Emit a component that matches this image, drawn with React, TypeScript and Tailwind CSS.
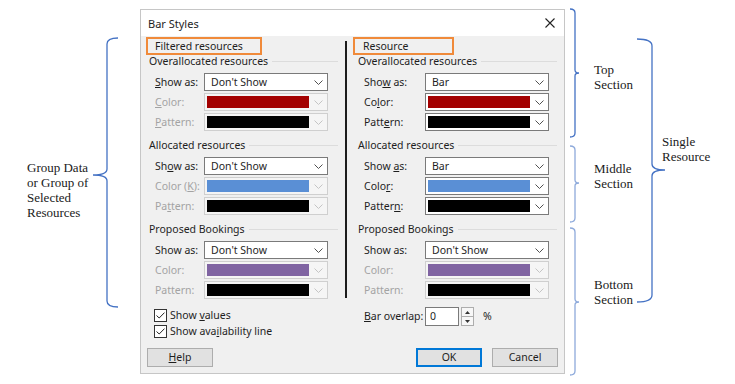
import type { ReactNode } from "react";

type ComboProps = {
  value?: string;
  swatch?: string;
  disabled?: boolean;
};

function Chevron({ disabled }: { disabled?: boolean }) {
  return (
    <svg width="9" height="5" viewBox="0 0 9 5">
      <path
        d="M0.5 0.5 L4.5 4.5 L8.5 0.5"
        fill="none"
        stroke={disabled ? "#c4c4c4" : "#505050"}
        strokeWidth="1"
      />
    </svg>
  );
}

function Combo({ value, swatch, disabled }: ComboProps) {
  return (
    <div
      className={`flex h-[18px] w-[124px] items-center border ${
        disabled ? "border-[#cfcfcf] bg-[#f5f5f5]" : "border-[#7a7a7a] bg-white"
      }`}
    >
      {swatch ? (
        <div className={`ml-[2px] h-[12px] w-[102px] ${swatch}`} />
      ) : (
        <span className="ml-[6px] whitespace-nowrap text-[#1e1e1e]">{value}</span>
      )}
      <span className="ml-auto mr-[4px] flex items-center">
        <Chevron disabled={disabled} />
      </span>
    </div>
  );
}

function Row({
  label,
  labelWidth,
  disabled,
  children,
}: {
  label: ReactNode;
  labelWidth: string;
  disabled?: boolean;
  children: ReactNode;
}) {
  return (
    <div className="flex h-[18px] items-center">
      <span
        className={`${labelWidth} whitespace-nowrap ${disabled ? "text-[#a3a3a3]" : "text-[#1e1e1e]"}`}
      >
        {label}
      </span>
      {children}
    </div>
  );
}

function GroupLabel({ text, indent }: { text: string; indent: string }) {
  return (
    <div className={`flex h-[12px] items-center ${indent}`}>
      <span className="whitespace-nowrap text-[#1e1e1e]">{text}</span>
      <div className="ml-[4px] h-px flex-1 bg-[#dcdcdc]" />
    </div>
  );
}

function Checkbox({ label }: { label: ReactNode }) {
  return (
    <div className="flex h-[16px] items-center pl-[8px]">
      <div className="flex h-[13px] w-[13px] items-center justify-center border border-[#333333] bg-white">
        <svg width="9" height="7" viewBox="0 0 9 7">
          <path d="M0.5 3.5 L3.2 6 L8.5 0.6" fill="none" stroke="#222" strokeWidth="1" />
        </svg>
      </div>
      <span className="ml-[3px] whitespace-nowrap text-[#1e1e1e]">{label}</span>
    </div>
  );
}

function LeftGroup({
  title,
  color,
  colorLabel,
  showLabel,
  patternLabel,
}: {
  title: string;
  color: string;
  colorLabel: ReactNode;
  showLabel: ReactNode;
  patternLabel: ReactNode;
}) {
  return (
    <div className="flex flex-col">
      <GroupLabel text={title} indent="pl-[3px]" />
      <div className="mt-[6px] flex flex-col gap-[2px] pl-[9px]">
        <Row label={showLabel} labelWidth="w-[49px]">
          <Combo value="Don't Show" />
        </Row>
        <Row label={colorLabel} labelWidth="w-[49px]" disabled>
          <Combo swatch={color} disabled />
        </Row>
        <Row label={patternLabel} labelWidth="w-[49px]" disabled>
          <Combo swatch="bg-black" disabled />
        </Row>
      </div>
    </div>
  );
}

function RightGroup({
  title,
  value,
  color,
  disabled,
  showLabel,
  colorLabel,
  patternLabel,
}: {
  title: string;
  value: string;
  color: string;
  disabled?: boolean;
  showLabel: ReactNode;
  colorLabel: ReactNode;
  patternLabel: ReactNode;
}) {
  return (
    <div className="flex flex-col">
      <GroupLabel text={title} indent="pl-[6px]" />
      <div className="mt-[6px] flex flex-col gap-[2px] pl-[12px]">
        <Row label={showLabel} labelWidth="w-[61px]">
          <Combo value={value} />
        </Row>
        <Row label={colorLabel} labelWidth="w-[61px]" disabled={disabled}>
          <Combo swatch={color} disabled={disabled} />
        </Row>
        <Row label={patternLabel} labelWidth="w-[61px]" disabled={disabled}>
          <Combo swatch="bg-black" disabled={disabled} />
        </Row>
      </div>
    </div>
  );
}

function Dialog() {
  return (
    <div className="ml-[140px] mt-[9px] flex w-[425px] flex-col border border-[#c6c6c6] bg-[#f0f0f0] font-['Noto_Sans',sans-serif] text-[10.5px] leading-none">
      {/* title bar */}
      <div className="flex h-[26px] items-center bg-white pl-[7px] pr-[9px]">
        <span className="text-[11px] text-[#1e1e1e]">Bar Styles</span>
        <svg className="ml-auto" width="10" height="10" viewBox="0 0 10 10">
          <path d="M0.5 0.5 L9.5 9.5 M9.5 0.5 L0.5 9.5" stroke="#222" strokeWidth="1.1" />
        </svg>
      </div>

      {/* columns */}
      <div className="flex pt-[1px]">
        <div className="ml-[5px] flex w-[192px] flex-col">
          <div className="flex h-[18px] w-[116px] items-center border-2 border-[#f08a3a] pl-[7px] text-[#1e1e1e]">
            Filtered resources
          </div>
          <div className="flex flex-col gap-[8px]">
            <LeftGroup
              title="Overallocated resources"
              color="bg-[#a30000]"
              showLabel={<><u>S</u>how as:</>}
              colorLabel={<><u>C</u>olor:</>}
              patternLabel={<><u>P</u>attern:</>}
            />
            <LeftGroup
              title="Allocated resources"
              color="bg-[#5a8fd5]"
              showLabel={<>Sh<u>o</u>w as:</>}
              colorLabel={<>Color (<u>K</u>):</>}
              patternLabel={<>Pa<u>t</u>tern:</>}
            />
            <LeftGroup
              title="Proposed Bookings"
              color="bg-[#8064a2]"
              showLabel="Show as:"
              colorLabel="Color:"
              patternLabel="Pattern:"
            />
          </div>
        </div>

        <div className="ml-[7px] mt-[4px] h-[257px] w-[2px] bg-[#1c1c1c]" />

        <div className="ml-[5px] flex w-[205px] flex-col">
          <div className="ml-[1px] flex h-[18px] w-[101px] items-center border-2 border-[#f08a3a] pl-[8px] text-[#1e1e1e]">
            Resource
          </div>
          <div className="flex flex-col gap-[8px]">
            <RightGroup
              title="Overallocated resources"
              value="Bar"
              color="bg-[#a30000]"
              showLabel={<>Sho<u>w</u> as:</>}
              colorLabel={<>Co<u>l</u>or:</>}
              patternLabel={<>Patt<u>e</u>rn:</>}
            />
            <RightGroup
              title="Allocated resources"
              value="Bar"
              color="bg-[#5a8fd5]"
              showLabel={<>Show <u>a</u>s:</>}
              colorLabel={<>Colo<u>r</u>:</>}
              patternLabel={<>Patter<u>n</u>:</>}
            />
            <RightGroup
              title="Proposed Bookings"
              value="Don't Show"
              color="bg-[#8064a2]"
              disabled
              showLabel="Show as:"
              colorLabel="Color:"
              patternLabel="Pattern:"
            />
          </div>
        </div>
      </div>

      {/* options */}
      <div className="mt-[8px] flex h-[32px]">
        <div className="ml-[5px] flex w-[192px] flex-col">
          <Checkbox label={<>Show <u>v</u>alues</>} />
          <Checkbox label={<>Show ava<u>i</u>lability line</>} />
        </div>
        <div className="ml-[26px] flex h-[19px] items-center">
          <span className="w-[61px] whitespace-nowrap text-[#1e1e1e]">
            <u>B</u>ar overlap:
          </span>
          <div className="flex h-[19px] w-[34px] items-center border border-[#7a7a7a] bg-white pl-[4px] text-[#1e1e1e]">
            0
          </div>
          <div className="ml-[2px] flex h-[19px] w-[13px] flex-col border border-[#adadad] bg-[#f7f7f7]">
            <div className="flex flex-1 items-center justify-center border-b border-[#adadad]">
              <svg width="5" height="3" viewBox="0 0 5 3">
                <path d="M0 3 L2.5 0 L5 3 Z" fill="#333" />
              </svg>
            </div>
            <div className="flex flex-1 items-center justify-center">
              <svg width="5" height="3" viewBox="0 0 5 3">
                <path d="M0 0 L2.5 3 L5 0 Z" fill="#333" />
              </svg>
            </div>
          </div>
          <span className="ml-[9px] text-[#1e1e1e]">%</span>
        </div>
      </div>

      {/* buttons */}
      <div className="mb-[6px] mt-[9px] flex h-[19px]">
        <div className="ml-[6px] flex w-[66px] items-center justify-center border border-[#adadad] bg-[#e1e1e1] text-[#1e1e1e]">
          <span>
            <u>H</u>elp
          </span>
        </div>
        <div className="ml-auto flex w-[66px] items-center justify-center border-2 border-[#0078d7] bg-[#e1e1e1] text-[#1e1e1e]">
          OK
        </div>
        <div className="ml-[10px] mr-[6px] flex w-[66px] items-center justify-center border border-[#adadad] bg-[#e1e1e1] text-[#1e1e1e]">
          Cancel
        </div>
      </div>
    </div>
  );
}

function Annotations() {
  return (
    <div className="pointer-events-none absolute inset-0 font-['Liberation_Serif',serif] text-[13px] leading-[15px] text-[#1a1a1a]">
      <svg className="absolute left-0 top-0" width="735" height="384" viewBox="0 0 735 384">
        <g fill="none" strokeWidth="1.3">
          <path
            d="M118 38 Q107 38 107 44 L107 169 Q107 175 93 175 Q107 175 107 181 L107 301 Q107 307 118 307"
            stroke="#4472c4"
          />
          <path
            d="M570 9 Q575 9 575 13 L575 70 Q575 73 579 73 Q575 73 575 76 L575 133 Q575 137 570 137"
            stroke="#4472c4"
          />
          <path
            d="M570 146 Q575 146 575 150 L575 180 Q575 183 579 183 Q575 183 575 186 L575 218 Q575 222 570 222"
            stroke="#8eaadb"
          />
          <path
            d="M570 228 Q575 228 575 232 L575 299 Q575 302 579 302 Q575 302 575 305 L575 371 Q575 375 570 375"
            stroke="#8eaadb"
          />
          <path
            d="M637 39 Q652 39 652 46 L652 164 Q652 170 665 170 Q652 170 652 176 L652 295 Q652 302 637 302"
            stroke="#4472c4"
          />
        </g>
      </svg>
      <div className="absolute left-[27px] top-[160px]">
        Group Data
        <br />
        or Group of
        <br />
        Selected
        <br />
        Resources
      </div>
      <div className="absolute left-[594px] top-[62px]">
        Top
        <br />
        Section
      </div>
      <div className="absolute left-[594px] top-[161px]">
        Middle
        <br />
        Section
      </div>
      <div className="absolute left-[594px] top-[277px]">
        Bottom
        <br />
        Section
      </div>
      <div className="absolute left-[662px] top-[134px]">
        Single
        <br />
        Resource
      </div>
    </div>
  );
}

export default function App() {
  return (
    <div className="relative h-[384px] w-[735px] overflow-hidden bg-white">
      <Dialog />
      <Annotations />
    </div>
  );
}
